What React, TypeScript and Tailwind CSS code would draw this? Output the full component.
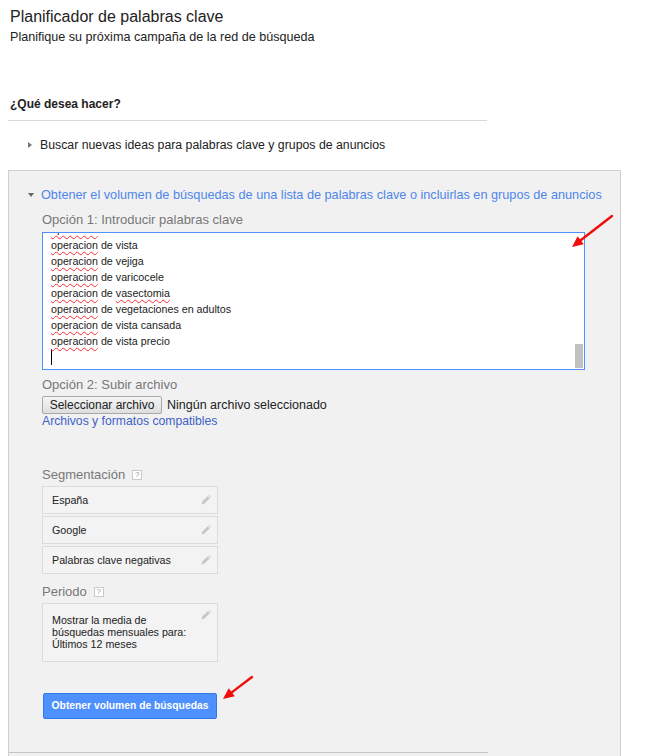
import React from 'react';

const KEYWORDS = [
    'vista',
    'vejiga',
    'varicocele',
    'vasectomia',
    'vegetaciones en adultos',
    'vista cansada',
    'vista precio',
];

function Pencil({ className = '' }: { className?: string }) {
    return (
        <svg width="10" height="10" viewBox="0 0 10 10" className={className}>
            <path d="M0.5 9.5 L1.4 6.6 L6.8 1.2 L8.8 3.2 L3.4 8.6 Z" fill="#c6c6c6" />
            <path d="M7.4 0.6 L8 0 L10 2 L9.4 2.6 Z" fill="#c6c6c6" />
        </svg>
    );
}

function HelpBox() {
    return (
        <span className="ml-[7px] inline-flex h-[10px] w-[10px] items-center justify-center border border-[#c9c9c9] bg-white text-[8px] leading-none text-[#999]">
            ?
        </span>
    );
}

function SettingRow({ label }: { label: string }) {
    return (
        <div className="flex h-[28px] w-[176px] items-center justify-between border border-[#dcdcdc] bg-[#f3f3f3] pl-[9px] pr-[6px] text-[10.7px] text-[#222]">
            <span>{label}</span>
            <Pencil />
        </div>
    );
}

function Arrow({ x1, y1, x2, y2 }: { x1: number; y1: number; x2: number; y2: number }) {
    const a = Math.atan2(y2 - y1, x2 - x1);
    const len = 11;
    const w = 5;
    const bx = x2 - len * Math.cos(a);
    const by = y2 - len * Math.sin(a);
    const px = -Math.sin(a) * w;
    const py = Math.cos(a) * w;
    return (
        <g>
            <line x1={x1} y1={y1} x2={bx} y2={by} stroke="#f20d0d" strokeWidth="2.4" strokeLinecap="round" />
            <polygon points={`${x2},${y2} ${bx + px},${by + py} ${bx - px},${by - py}`} fill="#f20d0d" />
        </g>
    );
}

function Misspelled({ children }: { children: React.ReactNode }) {
    return <span className="underline decoration-red-500 decoration-wavy decoration-1 underline-offset-2">{children}</span>;
}

export default function App() {
    return (
        <div className="relative h-[756px] w-[645px] overflow-hidden bg-white font-['Liberation_Sans',Arial,sans-serif] text-[12.3px] text-[#222]">
            <div className="pl-[10px] pt-[7px]">
                <h1 className="text-[16px] leading-[20px] text-[#222]">Planificador de palabras clave</h1>
                <p className="mt-[2px] text-[12.6px] leading-[16px] text-[#222]">Planifique su próxima campaña de la red de búsqueda</p>
                <h2 className="mt-[51px] text-[12px] font-bold leading-[16px]">¿Qué desea hacer?</h2>
            </div>
            <div className="ml-[8px] mt-[8px] w-[479px] border-t border-[#d9d9d9]" />

            <div className="mt-[16px] flex items-center pl-[28px] leading-[16px]">
                <span className="mr-[8px] h-0 w-0 border-y-[3.5px] border-l-[4px] border-y-transparent border-l-[#777]" />
                <span>Buscar nuevas ideas para palabras clave y grupos de anuncios</span>
            </div>

            <div className="ml-[8px] mt-[17px] h-[620px] w-[613px] border border-[#d0d0d0] bg-[#f1f1f1]">
                <div className="flex items-center pl-[19px] pt-[16px] leading-[16px]">
                    <span className="mr-[7px] h-0 w-0 border-x-[3.5px] border-t-[4px] border-x-transparent border-t-[#666]" />
                    <span className="text-[12.7px] text-[#4f86ec]">
                        Obtener el volumen de búsquedas de una lista de palabras clave o incluirlas en grupos de anuncios
                    </span>
                </div>

                <div className="pl-[33px]">
                    <p className="mt-[9px] text-[13px] leading-[16px] text-[#777]">Opción 1: Introducir palabras clave</p>

                    <div className="relative mt-[4px] h-[138px] w-[543px] overflow-hidden border border-[#4d90fe] bg-white pl-[8px] text-[10.7px] leading-[16px] text-[#222]">
                        <div className="mt-[-12px]">
                            <div>
                                <Misspelled>operacion</Misspelled> de varices
                            </div>
                            {KEYWORDS.map((k) => (
                                <div key={k}>
                                    <Misspelled>operacion</Misspelled> de{' '}
                                    {k === 'vasectomia' ? <Misspelled>vasectomia</Misspelled> : k}
                                </div>
                            ))}
                            <div className="h-[16px] w-px bg-black" />
                        </div>
                        <div className="absolute bottom-[1px] right-[1px] h-[24px] w-[8px] bg-[#c1c1c1]" />
                    </div>

                    <p className="mt-[7px] text-[13px] leading-[16px] text-[#777]">Opción 2: Subir archivo</p>
                    <div className="mt-[3px] flex items-center">
                        <button
                            type="button"
                            className="h-[18px] w-[120px] rounded-[2px] border border-[#a9a9a9] bg-gradient-to-b from-[#f6f6f6] to-[#dedede] text-[12px] leading-none text-[#222]"
                        >
                            Seleccionar archivo
                        </button>
                        <span className="ml-[5px] text-[12.5px]">Ningún archivo seleccionado</span>
                    </div>
                    <a className="mt-[-2px] block text-[12.2px] leading-[16px] text-[#3f62c8]">Archivos y formatos compatibles</a>

                    <div className="mt-[38px] flex items-center text-[13px] leading-[16px] text-[#777]">
                        Segmentación
                        <HelpBox />
                    </div>
                    <div className="mt-[3px] flex flex-col gap-[2px]">
                        <SettingRow label="España" />
                        <SettingRow label="Google" />
                        <SettingRow label="Palabras clave negativas" />
                    </div>

                    <div className="mt-[10px] flex items-center text-[13px] leading-[16px] text-[#777]">
                        Periodo
                        <HelpBox />
                    </div>
                    <div className="relative mt-[3px] h-[59px] w-[176px] border border-[#dcdcdc] bg-[#f3f3f3] pl-[9px] pt-[10px] text-[10.7px] leading-[12px] text-[#222]">
                        <p>Mostrar la media de</p>
                        <p>búsquedas mensuales para:</p>
                        <p>Últimos 12 meses</p>
                        <Pencil className="absolute right-[6px] top-[6px]" />
                    </div>

                    <button
                        type="button"
                        className="ml-px mt-[31px] h-[26px] w-[174px] rounded-[2px] border border-[#3079ed] bg-[#4d90fe] text-[10.3px] font-bold text-white"
                    >
                        Obtener volumen de búsquedas
                    </button>
                </div>
                <div className="mt-[33px] w-[479px] border-t border-[#c4c4c4]" />
            </div>

            <svg className="pointer-events-none absolute left-0 top-0" width="645" height="756">
                <Arrow x1={612} y1={216} x2={572} y2={247} />
                <Arrow x1={252} y1={677} x2={223} y2={699} />
            </svg>
        </div>
    );
}
